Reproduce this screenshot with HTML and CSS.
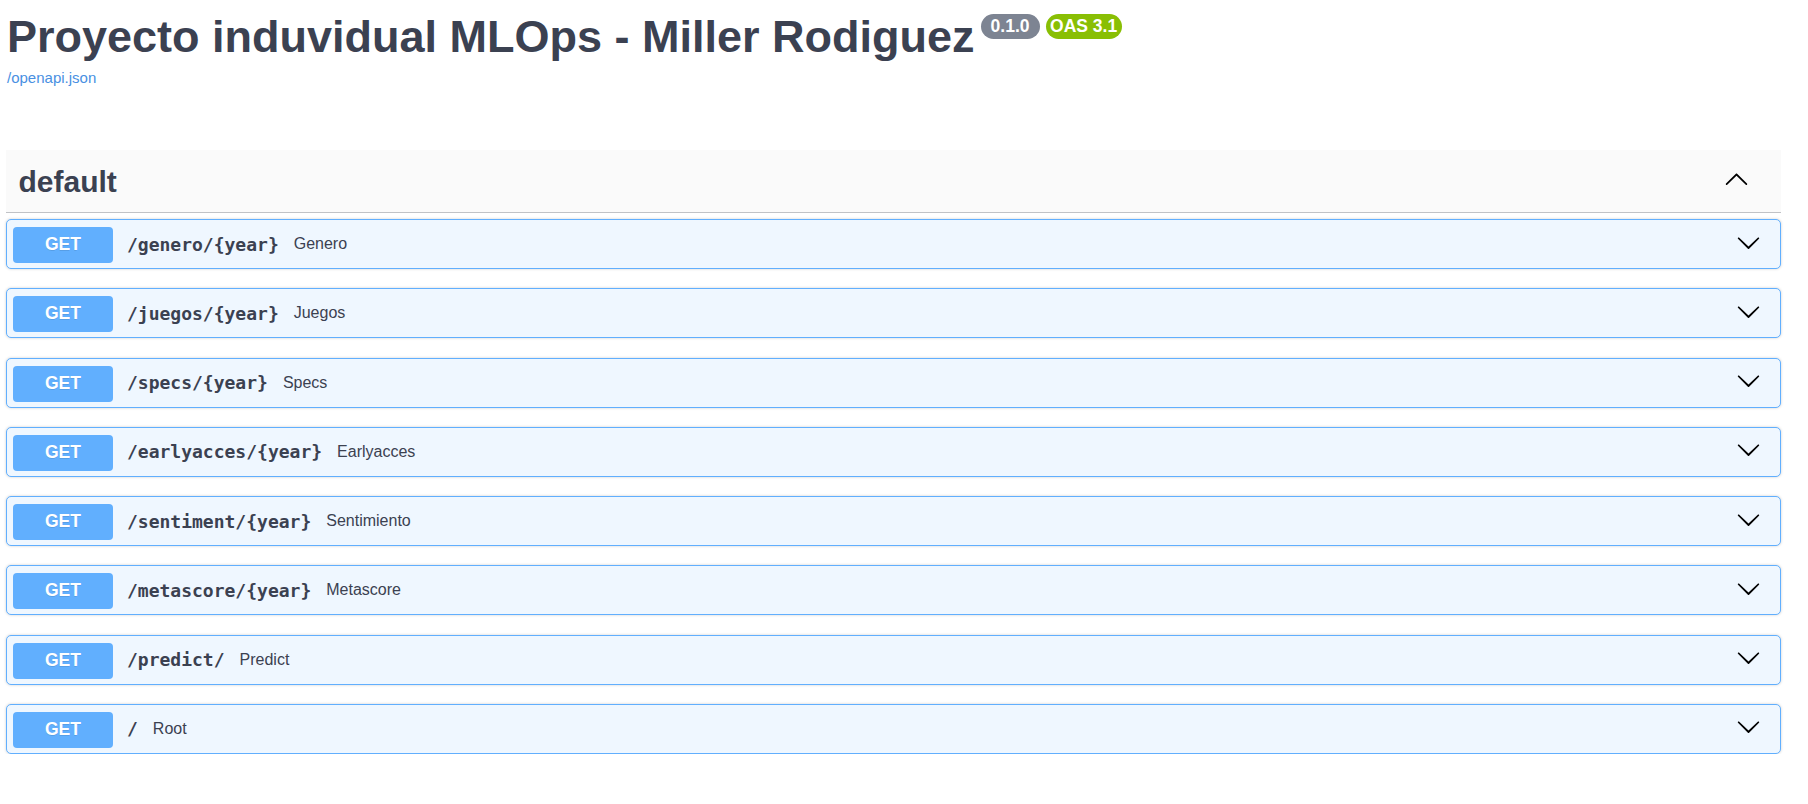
FILE: index.html
```html
<!DOCTYPE html>
<html lang="en">
<head>
<meta charset="utf-8">
<title>Proyecto induvidual MLOps - Miller Rodiguez - Swagger UI</title>
<link rel="stylesheet" href="styles.css">
</head>
<body>
<div class="wrapper">
  <div class="info">
    <h2 class="title">Proyecto induvidual MLOps - Miller Rodiguez<span class="badge badge-version">0.1.0</span><span class="badge badge-oas">OAS 3.1</span></h2>
    <a class="spec-link" href="#">/openapi.json</a>
  </div>

  <section class="tag-section">
    <h3 class="tag-header">
      <span class="tag-name">default</span>
      <svg class="arrow-up" viewBox="0 0 20 20" width="25" height="25" aria-hidden="true"><path d="M17.418 14.908c.272.268.709.268.979 0s.271-.701 0-.969l-7.908-7.83c-.27-.268-.707-.268-.979 0l-7.908 7.83c-.27.268-.27.701 0 .969.271.268.709.268.979 0L10 7.773l7.418 7.135z"/></svg>
    </h3>

    <div class="ops">
      <div class="op">
        <span class="method">GET</span>
        <span class="path">/genero/{year}</span>
        <span class="desc">Genero</span>
        <svg class="arrow-down" viewBox="0 0 20 20" width="25" height="25" aria-hidden="true"><path d="M17.418 6.109c.272-.268.709-.268.979 0s.271.701 0 .969l-7.908 7.83c-.27.268-.707.268-.979 0l-7.908-7.83c-.27-.268-.27-.701 0-.969.271-.268.709-.268.979 0L10 13.25l7.418-7.141z"/></svg>
      </div>
      <div class="op">
        <span class="method">GET</span>
        <span class="path">/juegos/{year}</span>
        <span class="desc">Juegos</span>
        <svg class="arrow-down" viewBox="0 0 20 20" width="25" height="25" aria-hidden="true"><path d="M17.418 6.109c.272-.268.709-.268.979 0s.271.701 0 .969l-7.908 7.83c-.27.268-.707.268-.979 0l-7.908-7.83c-.27-.268-.27-.701 0-.969.271-.268.709-.268.979 0L10 13.25l7.418-7.141z"/></svg>
      </div>
      <div class="op">
        <span class="method">GET</span>
        <span class="path">/specs/{year}</span>
        <span class="desc">Specs</span>
        <svg class="arrow-down" viewBox="0 0 20 20" width="25" height="25" aria-hidden="true"><path d="M17.418 6.109c.272-.268.709-.268.979 0s.271.701 0 .969l-7.908 7.83c-.27.268-.707.268-.979 0l-7.908-7.83c-.27-.268-.27-.701 0-.969.271-.268.709-.268.979 0L10 13.25l7.418-7.141z"/></svg>
      </div>
      <div class="op">
        <span class="method">GET</span>
        <span class="path">/earlyacces/{year}</span>
        <span class="desc">Earlyacces</span>
        <svg class="arrow-down" viewBox="0 0 20 20" width="25" height="25" aria-hidden="true"><path d="M17.418 6.109c.272-.268.709-.268.979 0s.271.701 0 .969l-7.908 7.83c-.27.268-.707.268-.979 0l-7.908-7.83c-.27-.268-.27-.701 0-.969.271-.268.709-.268.979 0L10 13.25l7.418-7.141z"/></svg>
      </div>
      <div class="op">
        <span class="method">GET</span>
        <span class="path">/sentiment/{year}</span>
        <span class="desc">Sentimiento</span>
        <svg class="arrow-down" viewBox="0 0 20 20" width="25" height="25" aria-hidden="true"><path d="M17.418 6.109c.272-.268.709-.268.979 0s.271.701 0 .969l-7.908 7.83c-.27.268-.707.268-.979 0l-7.908-7.83c-.27-.268-.27-.701 0-.969.271-.268.709-.268.979 0L10 13.25l7.418-7.141z"/></svg>
      </div>
      <div class="op">
        <span class="method">GET</span>
        <span class="path">/metascore/{year}</span>
        <span class="desc">Metascore</span>
        <svg class="arrow-down" viewBox="0 0 20 20" width="25" height="25" aria-hidden="true"><path d="M17.418 6.109c.272-.268.709-.268.979 0s.271.701 0 .969l-7.908 7.83c-.27.268-.707.268-.979 0l-7.908-7.83c-.27-.268-.27-.701 0-.969.271-.268.709-.268.979 0L10 13.25l7.418-7.141z"/></svg>
      </div>
      <div class="op">
        <span class="method">GET</span>
        <span class="path">/predict/</span>
        <span class="desc">Predict</span>
        <svg class="arrow-down" viewBox="0 0 20 20" width="25" height="25" aria-hidden="true"><path d="M17.418 6.109c.272-.268.709-.268.979 0s.271.701 0 .969l-7.908 7.83c-.27.268-.707.268-.979 0l-7.908-7.83c-.27-.268-.27-.701 0-.969.271-.268.709-.268.979 0L10 13.25l7.418-7.141z"/></svg>
      </div>
      <div class="op">
        <span class="method">GET</span>
        <span class="path">/</span>
        <span class="desc">Root</span>
        <svg class="arrow-down" viewBox="0 0 20 20" width="25" height="25" aria-hidden="true"><path d="M17.418 6.109c.272-.268.709-.268.979 0s.271.701 0 .969l-7.908 7.83c-.27.268-.707.268-.979 0l-7.908-7.83c-.27-.268-.27-.701 0-.969.271-.268.709-.268.979 0L10 13.25l7.418-7.141z"/></svg>
      </div>
    </div>
  </section>
</div>
</body>
</html>
```

FILE: styles.css
```css
html, body {
  margin: 0;
  padding: 0;
  background: #ffffff;
}

body {
  font-family: "Liberation Sans", Arial, sans-serif;
  color: #3b4151;
}

.wrapper {
  padding: 12px 27px 0 6px;
}

.info {
  padding-left: 1px;
}

.title {
  margin: 0;
  font-size: 45px;
  line-height: 50px;
  font-weight: 700;
  color: #3b4151;
  white-space: nowrap;
}

.badge {
  display: inline-block;
  vertical-align: top;
  margin-top: 2px;
  height: 25px;
  line-height: 25px;
  border-radius: 13px;
  font-size: 17.5px;
  font-weight: 700;
  color: #ffffff;
  font-family: "Liberation Sans", Arial, sans-serif;
}

.badge-version {
  margin-left: 6px;
  padding: 0 10px;
  background: #7d8492;
}

.badge-oas {
  margin-left: 6px;
  padding: 0 4.5px;
  background: #89bf04;
}

.spec-link {
  display: block;
  margin-top: 7px;
  font-size: 15px;
  line-height: 18px;
  color: #4990e2;
  text-decoration: none;
}

.tag-section {
  margin-top: 63px;
}

.tag-header {
  display: flex;
  align-items: center;
  margin: 0 0 6px;
  padding: 12.5px 25px 12.5px 12.5px;
  background: #fafafa;
  border-bottom: 1px solid rgba(59, 65, 81, 0.3);
}

.tag-name {
  font-size: 30px;
  line-height: 37px;
  font-weight: 700;
  color: #3b4151;
}

.arrow-up {
  margin-left: auto;
  margin-right: 7px;
  margin-bottom: 6px;
  fill: #000000;
}

.ops {
  display: flex;
  flex-direction: column;
  gap: 19.25px;
}

.op {
  display: flex;
  align-items: center;
  box-sizing: border-box;
  height: 50px;
  padding: 0 6px;
  border: 1px solid #61affe;
  border-radius: 5px;
  background: #eff7ff;
  box-shadow: 0 0 3px rgba(0, 0, 0, 0.19);
}

.method {
  flex: none;
  width: 100px;
  height: 36px;
  line-height: 35px;
  margin-top: 2px;
  border-radius: 4px;
  background: #61affe;
  color: #ffffff;
  font-size: 17.5px;
  font-weight: 700;
  text-align: center;
  text-shadow: 0 1px 0 rgba(0, 0, 0, 0.1);
}

.path {
  margin-left: 14px;
  font-family: "DejaVu Sans Mono", "Liberation Mono", monospace;
  font-size: 18px;
  font-weight: 700;
  color: #3b4151;
  white-space: nowrap;
}

.desc {
  margin-left: 15px;
  font-size: 16px;
  color: #3b4151;
}

.arrow-down {
  margin-left: auto;
  margin-right: 13px;
  margin-bottom: 4px;
  fill: #000000;
}
```
